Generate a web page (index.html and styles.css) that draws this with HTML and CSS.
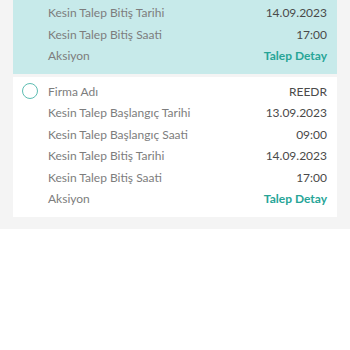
FILE: index.html
```html
<!DOCTYPE html>
<html lang="tr">
<head>
    <meta charset="UTF-8">
    <meta name="viewport" content="width=device-width, initial-scale=1.0">
    <title>Talepler</title>
    <link rel="stylesheet" href="styles.css">
</head>
<body>
    <div class="list">
        <div class="card card-selected card-cut">
            <div class="row">
                <span class="mark"></span>
                <span class="label">Kesin Talep Bitiş Tarihi</span>
                <span class="value">14.09.2023</span>
            </div>
            <div class="row">
                <span class="mark"></span>
                <span class="label">Kesin Talep Bitiş Saati</span>
                <span class="value">17:00</span>
            </div>
            <div class="row">
                <span class="mark"></span>
                <span class="label">Aksiyon</span>
                <a class="value link" href="#">Talep Detay</a>
            </div>
        </div>
        <div class="card">
            <div class="row">
                <span class="mark"><span class="radio"></span></span>
                <span class="label">Firma Adı</span>
                <span class="value">REEDR</span>
            </div>
            <div class="row">
                <span class="mark"></span>
                <span class="label">Kesin Talep Başlangıç Tarihi</span>
                <span class="value">13.09.2023</span>
            </div>
            <div class="row">
                <span class="mark"></span>
                <span class="label">Kesin Talep Başlangıç Saati</span>
                <span class="value">09:00</span>
            </div>
            <div class="row">
                <span class="mark"></span>
                <span class="label">Kesin Talep Bitiş Tarihi</span>
                <span class="value">14.09.2023</span>
            </div>
            <div class="row">
                <span class="mark"></span>
                <span class="label">Kesin Talep Bitiş Saati</span>
                <span class="value">17:00</span>
            </div>
            <div class="row">
                <span class="mark"></span>
                <span class="label">Aksiyon</span>
                <a class="value link" href="#">Talep Detay</a>
            </div>
        </div>
    </div>
</body>
</html>
```

FILE: styles.css
```css
body {
    font-family: Lato, 'Open Sans', sans-serif;
    margin: 0;
    padding: 0;
    background-color: #ffffff;
}
.list {
    background-color: #f4f4f4;
    padding: 0 13px 12px;
    display: flex;
    flex-direction: column;
    gap: 3px;
}
.card {
    background: #ffffff;
    padding: 4px 10px 7px 9px;
}
.card-selected {
    background: #c7eaea;
}
.card-cut {
    padding-top: 2px;
}
.row {
    display: grid;
    grid-template-columns: 16px 1fr auto;
    column-gap: 10px;
    align-items: center;
    height: 21.5px;
    font-size: 12px;
}
.mark {
    display: flex;
    align-items: center;
}
.radio {
    width: 14px;
    height: 14px;
    border: 1.5px solid #5dbdb2;
    border-radius: 50%;
}
.label {
    color: #7d7d7d;
}
.value {
    color: #4a4a4a;
    text-align: right;
}
.link {
    color: #27a597;
    font-weight: bold;
    text-decoration: none;
}
```
